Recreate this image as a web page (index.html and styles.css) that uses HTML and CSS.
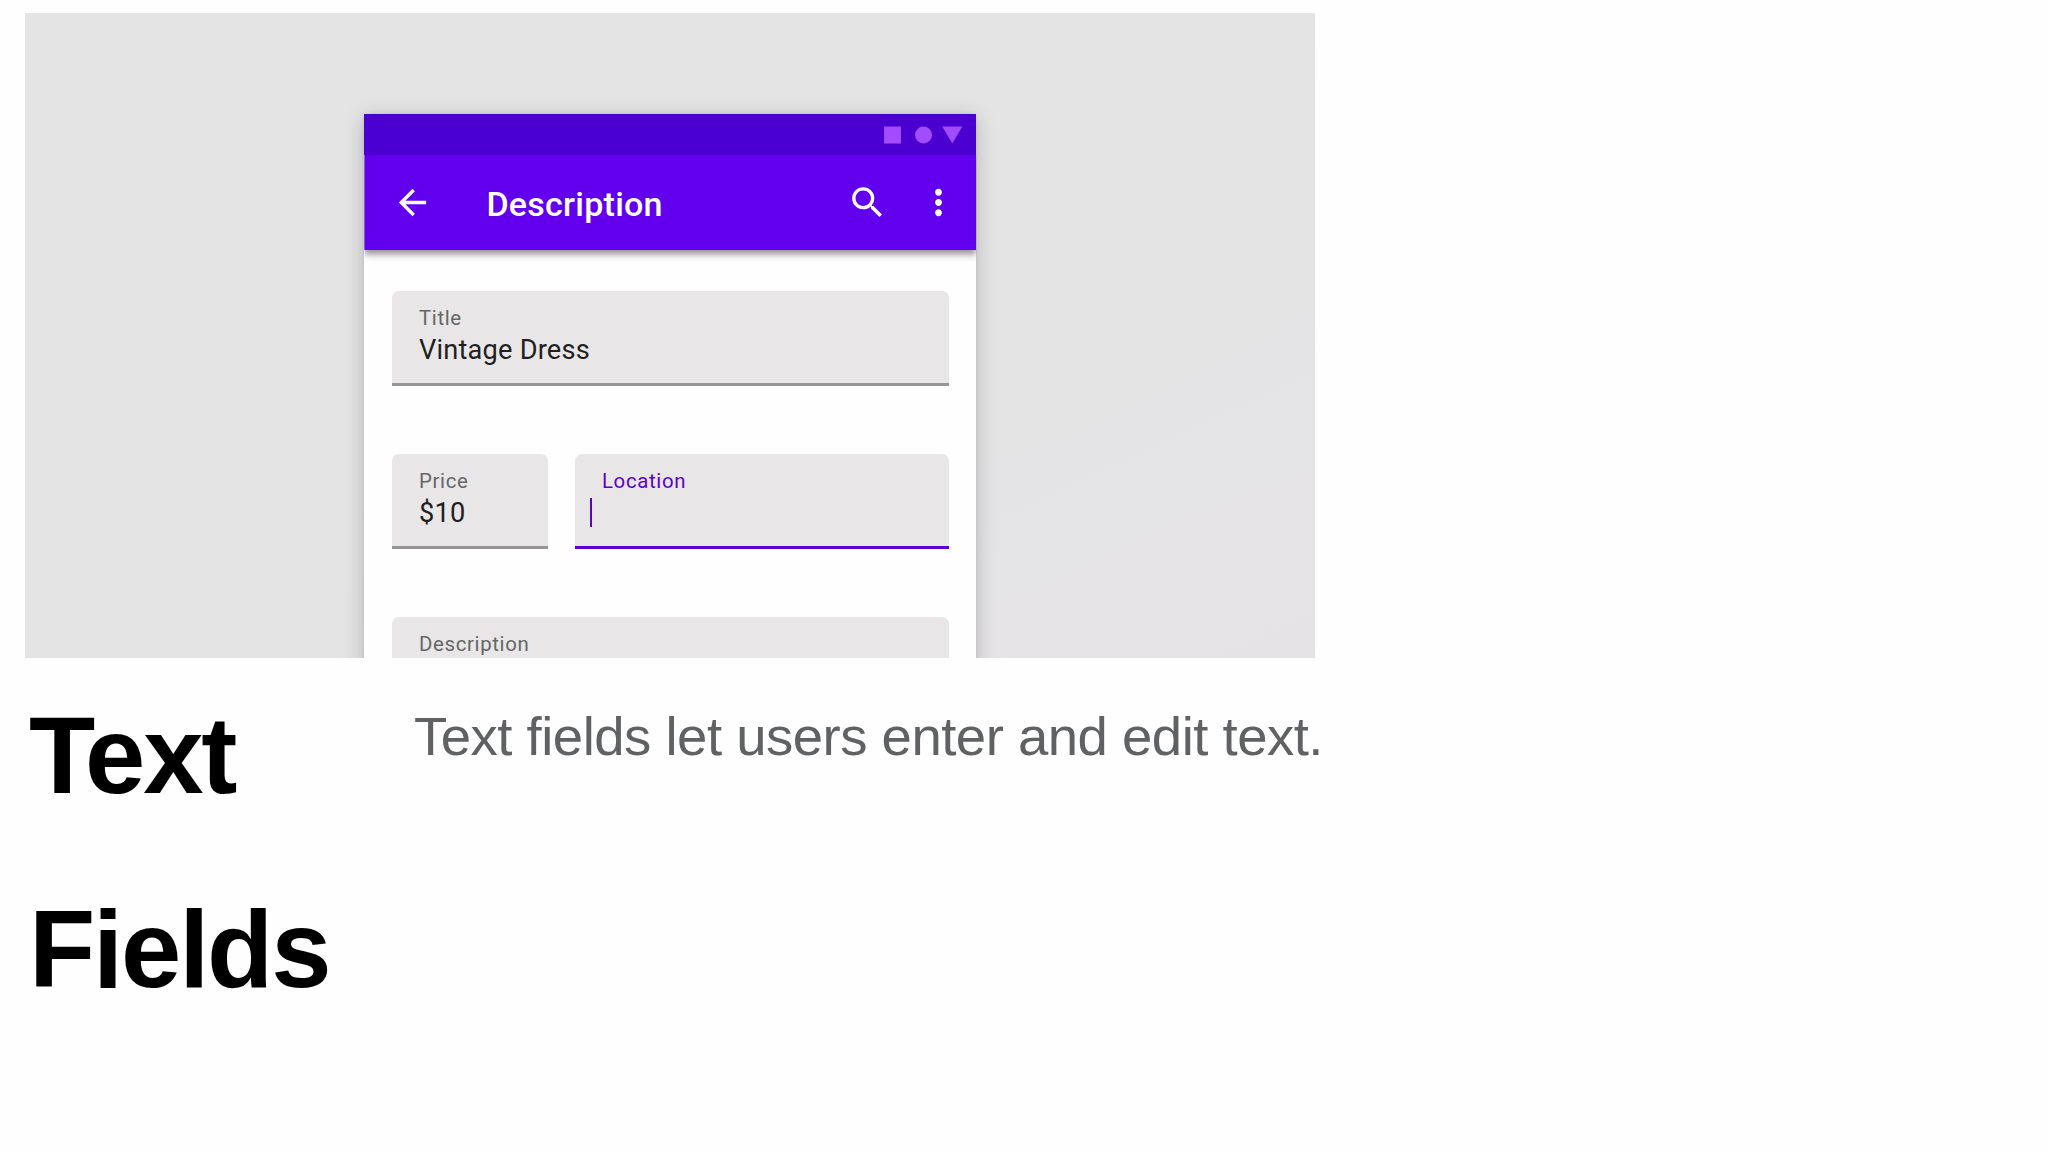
FILE: index.html
```
<!DOCTYPE html>
<html lang="en">
<head>
    <meta charset="UTF-8">
    <meta name="viewport" content="width=device-width, initial-scale=1.0">
    <title>Text Fields</title>
    <link rel="stylesheet" href="styles.css">
</head>
<body>
    <div class="preview">
        <div class="phone">
            <div class="status-bar">
                <svg width="80" height="18" viewBox="0 0 80 18">
                    <rect x="0" y="0.5" width="17" height="17"/>
                    <circle cx="39.5" cy="9" r="8.5"/>
                    <path d="M58.3 0.5h20l-10 17z"/>
                </svg>
            </div>
            <div class="app-bar">
                <svg class="icon" viewBox="0 0 24 24"><path d="M20 11H7.83l5.59-5.59L12 4l-8 8 8 8 1.41-1.41L7.83 13H20v-2z"/></svg>
                <span class="app-title">Description</span>
                <svg class="icon" viewBox="0 0 24 24"><path d="M15.5 14h-.79l-.28-.27A6.471 6.471 0 0 0 16 9.5 6.5 6.5 0 1 0 9.5 16c1.61 0 3.09-.59 4.23-1.57l.27.28v.79l5 4.99L20.49 19l-4.99-5zm-6 0C7.01 14 5 11.99 5 9.5S7.01 5 9.5 5 14 7.01 14 9.5 11.99 14 9.5 14z"/></svg>
                <svg class="icon more" viewBox="0 0 24 24"><path d="M12 8c1.1 0 2-.9 2-2s-.9-2-2-2-2 .9-2 2 .9 2 2 2zm0 2c-1.1 0-2 .9-2 2s.9 2 2 2 2-.9 2-2-.9-2-2-2zm0 6c-1.1 0-2 .9-2 2s.9 2 2 2 2-.9 2-2-.9-2-2-2z"/></svg>
            </div>
            <div class="form">
                <div class="field">
                    <div class="label">Title</div>
                    <div class="value">Vintage Dress</div>
                </div>
                <div class="row">
                    <div class="field price">
                        <div class="label">Price</div>
                        <div class="value">$10</div>
                    </div>
                    <div class="field location focused">
                        <div class="label">Location</div>
                        <div class="caret"></div>
                    </div>
                </div>
                <div class="field">
                    <div class="label">Description</div>
                </div>
            </div>
        </div>
    </div>

    <div class="info">
        <h1>Text<br>Fields</h1>
        <p>Text fields let users enter and edit text.</p>
    </div>
</body>
</html>
```
FILE: styles.css
```
body {
    margin: 0;
    padding: 12.5px 0 0 25px;
    background-color: #fefefe;
    font-family: "Liberation Sans", Arial, sans-serif;
    overflow: hidden;
}
.preview {
    width: 1290px;
    height: 645px;
    background: linear-gradient(155deg, #e4e4e4 50%, #e5e3e6);
    overflow: hidden;
    font-family: Roboto, sans-serif;
}
.phone {
    width: 612px;
    height: 700px;
    margin: 101.5px 0 0 339.4px;
    background-color: #fefefe;
    box-shadow: 0 3px 20px rgba(0, 0, 0, 0.2), 0 0 4px rgba(0, 0, 0, 0.08);
}
.status-bar {
    height: 41px;
    box-sizing: border-box;
    padding: 11.5px 12px 0 0;
    background-color: #4b00d1;
}
.status-bar svg {
    display: block;
    margin-left: auto;
    fill: #a14dff;
}
.app-bar {
    display: flex;
    align-items: center;
    height: 95px;
    box-sizing: border-box;
    padding: 0 17px 0 27.6px;
    background-color: #6200ee;
    box-shadow: 0 4px 7px rgba(0, 0, 0, 0.45);
    clip-path: inset(0 0 -20px 0);
    color: #fff;
}
.icon {
    width: 41px;
    height: 41px;
    fill: #fff;
}
.more {
    margin-left: 30px;
}
.app-title {
    flex: 1;
    margin-left: 53.4px;
    padding-top: 2px;
    font-size: 34px;
    font-weight: 500;
    line-height: 40px;
    letter-spacing: 0.25px;
}
.form {
    display: flex;
    flex-direction: column;
    gap: 68px;
    padding: 41px 27px 0 27.6px;
}
.row {
    display: flex;
    gap: 27px;
}
.field {
    height: 95px;
    box-sizing: border-box;
    padding: 15px 27px 0;
    background: linear-gradient(#979596, #979596) bottom / 100% 3px no-repeat #e8e6e7;
    border-radius: 7px 7px 0 0;
}
.price {
    width: 156px;
}
.location {
    flex: 1;
}
.focused {
    background: linear-gradient(#5b00cf, #5b00cf) bottom / 100% 3px no-repeat #e8e6e7;
}
.label {
    font-size: 20.4px;
    line-height: 24px;
    letter-spacing: 0.65px;
    color: #666;
}
.focused .label {
    color: #5b00cf;
}
.value {
    margin-top: 4px;
    font-size: 27.2px;
    line-height: 32px;
    letter-spacing: 0.2px;
    color: #1f1f1f;
}
.caret {
    width: 2px;
    height: 29px;
    margin: 5px 0 0 -12px;
    background-color: #5b00cf;
}
.info {
    display: flex;
}
h1 {
    width: 385px;
    margin: 1px 0 0 4px;
    font-size: 108.5px;
    line-height: 194px;
    letter-spacing: -2.2px;
}
p {
    margin: 30.5px 0 0;
    font-size: 54.5px;
    line-height: 97px;
    letter-spacing: -0.5px;
    color: #5f6163;
    white-space: nowrap;
}
```
